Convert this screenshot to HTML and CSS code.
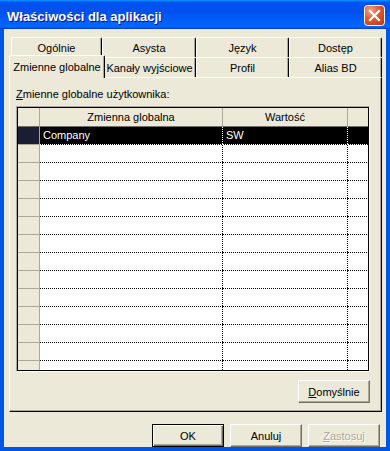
FILE: index.html
```html
<!DOCTYPE html>
<html lang="pl">
<head>
<meta charset="utf-8">
<title>Właściwości dla aplikacji</title>
<link rel="stylesheet" href="styles.css">
</head>
<body>
<div class="window">
  <div class="titlebar">
    <span class="title">Właściwości dla aplikacji</span>
    <button class="close" aria-label="Zamknij">
      <svg width="21" height="21" viewBox="0 0 21 21">
        <defs>
          <radialGradient id="cg" cx="30%" cy="25%" r="90%">
            <stop offset="0" stop-color="#F4A48A"/>
            <stop offset="0.45" stop-color="#E35C33"/>
            <stop offset="1" stop-color="#C03A12"/>
          </radialGradient>
        </defs>
        <rect x="0.5" y="0.5" width="20" height="20" rx="3" fill="url(#cg)" stroke="#fff"/>
        <path d="M6 6 L15 15 M15 6 L6 15" stroke="#fff" stroke-width="2.2" stroke-linecap="square"/>
      </svg>
    </button>
  </div>
  <div class="frame">
    <div class="tabs">
      <div class="tab-row">
        <div class="tab w91">Ogólnie</div>
        <div class="tab w94">Asysta</div>
        <div class="tab w93">Język</div>
        <div class="tab w93">Dostęp</div>
      </div>
      <div class="tab-row">
        <div class="tab w92 selected">Zmienne globalne</div>
        <div class="tab w93">Kanały wyjściowe</div>
        <div class="tab w93">Profil</div>
        <div class="tab w93">Alias BD</div>
      </div>
    </div>
    <div class="panel">
      <div class="label"><u>Z</u>mienne globalne użytkownika:</div>
      <div class="grid">
        <div class="grid-inner">
          <div class="grow head"><div class="rh"></div><div class="c1">Zmienna globalna</div><div class="c2">Wartość</div><div class="c3"></div></div>
          <div class="grow sel"><div class="rh"></div><div class="c1">Company</div><div class="c2">SW</div><div class="c3"></div></div>
          <div class="grow"><div class="rh"></div><div class="c1"></div><div class="c2"></div><div class="c3"></div></div>
          <div class="grow"><div class="rh"></div><div class="c1"></div><div class="c2"></div><div class="c3"></div></div>
          <div class="grow"><div class="rh"></div><div class="c1"></div><div class="c2"></div><div class="c3"></div></div>
          <div class="grow"><div class="rh"></div><div class="c1"></div><div class="c2"></div><div class="c3"></div></div>
          <div class="grow"><div class="rh"></div><div class="c1"></div><div class="c2"></div><div class="c3"></div></div>
          <div class="grow"><div class="rh"></div><div class="c1"></div><div class="c2"></div><div class="c3"></div></div>
          <div class="grow"><div class="rh"></div><div class="c1"></div><div class="c2"></div><div class="c3"></div></div>
          <div class="grow"><div class="rh"></div><div class="c1"></div><div class="c2"></div><div class="c3"></div></div>
          <div class="grow"><div class="rh"></div><div class="c1"></div><div class="c2"></div><div class="c3"></div></div>
          <div class="grow"><div class="rh"></div><div class="c1"></div><div class="c2"></div><div class="c3"></div></div>
          <div class="grow"><div class="rh"></div><div class="c1"></div><div class="c2"></div><div class="c3"></div></div>
          <div class="grow"><div class="rh"></div><div class="c1"></div><div class="c2"></div><div class="c3"></div></div>
          <div class="grow"><div class="rh"></div><div class="c1"></div><div class="c2"></div><div class="c3"></div></div>
        </div>
      </div>
      <div class="panel-actions">
        <button class="btn"><u>D</u>omyślnie</button>
      </div>
    </div>
    <div class="actions">
      <button class="btn default">OK</button>
      <button class="btn">Anuluj</button>
      <button class="btn disabled"><u>Z</u>astosuj</button>
    </div>
  </div>
</div>
</body>
</html>
```
FILE: styles.css
```css
* { box-sizing: border-box; }
html, body { margin: 0; padding: 0; }
body {
  width: 390px;
  height: 451px;
  overflow: hidden;
  background: #fff;
  font-family: "Liberation Sans", Arial, sans-serif;
  font-size: 11px;
  color: #000;
}
.window {
  width: 390px;
  height: 451px;
  display: flex;
  flex-direction: column;
}
.titlebar {
  flex: none;
  height: 29px;
  display: flex;
  align-items: flex-start;
  justify-content: space-between;
  padding: 0 5px 0 7px;
  background: linear-gradient(180deg, #0997ff, #0053ee 8%, #0050ee 40%, #0066ff 88%, #0066ff 93%, #005bff 95%, #003dd7 96%, #003dd7);
}
.title {
  color: #fff;
  font-weight: bold;
  font-size: 13px;
  line-height: 15px;
  margin-top: 9px;
  text-shadow: 1px 1px #0f1089;
}
.close {
  margin-top: 5px;
  width: 21px;
  height: 21px;
  padding: 0;
  border: 0;
  background: none;
  display: block;
}
.close svg { display: block; }
.frame {
  flex: 1;
  display: flex;
  flex-direction: column;
  background: #ECE9D8;
  border: 4px solid #0054E6;
  border-top: 0;
  padding: 8px 4px 0 5px;
}
.tabs {
  display: flex;
  flex-direction: column;
  padding-left: 2px;
}
.tab-row {
  display: flex;
  height: 20px;
}
.tab {
  flex: none;
  height: 20px;
  background: #ECE9D8;
  border-top: 1px solid #fff;
  border-left: 1px solid #fff;
  border-right: 1px solid #000;
  box-shadow: inset -1px 0 #ACA899;
  border-radius: 2px 2px 0 0;
  display: flex;
  align-items: center;
  justify-content: center;
  white-space: nowrap;
}
.w91 { width: 91px; }
.w92 { width: 92px; }
.w93 { width: 93px; }
.w94 { width: 94px; }
.tab.selected {
  width: 96px;
  height: 23px;
  margin: -2px -2px -1px -2px;
  z-index: 1;
  padding-bottom: 1px;
}
.panel {
  flex: none;
  height: 335px;
  display: flex;
  flex-direction: column;
  border-top: 1px solid #fff;
  border-left: 1px solid #fff;
  border-right: 1px solid #000;
  border-bottom: 1px solid #000;
  box-shadow: inset -1px -1px #ACA899;
  padding: 10px 11px 6px 6px;
}
.label {
  line-height: 13px;
  margin-bottom: 5px;
}
.grid {
  height: 266px;
  border: 1px solid;
  border-color: #ACA899 #fff #fff #ACA899;
}
.grid-inner {
  height: 264px;
  border: 1px solid #000;
  background: #fff;
  overflow: hidden;
}
.grow {
  display: grid;
  grid-template-columns: 22px 183px 125px 20px;
  height: 18px;
}
.grow > div {
  padding-left: 3px;
  line-height: 17px;
  white-space: nowrap;
  overflow: hidden;
  background:
    linear-gradient(to right, #000 50%, transparent 50%) left bottom / 2px 1px repeat-x,
    #fff;
}
.grow > .c1,
.grow > .c2 {
  background:
    linear-gradient(to right, #000 50%, transparent 50%) left bottom / 2px 1px repeat-x,
    linear-gradient(to bottom, #000 50%, transparent 50%) right top / 1px 2px repeat-y,
    #fff;
}
.grow > .rh {
  background: #ECE9D8;
  border-right: 1px solid #ACA899;
  border-bottom: 1px solid #ACA899;
}
.grow.head { height: 19px; }
.grow.head > div {
  background: #ECE9D8;
  border-right: 1px solid #ACA899;
  border-bottom: 1px solid #716F64;
  text-align: center;
  padding: 0;
  line-height: 18px;
}
.grow.head > .c3 { border-right: 0; }
.grow.sel > div {
  color: #fff;
  background:
    linear-gradient(to right, #fff 50%, transparent 50%) left bottom / 2px 1px repeat-x,
    #000;
}
.grow.sel > .c1,
.grow.sel > .c2 {
  background:
    linear-gradient(to right, #fff 50%, transparent 50%) left bottom / 2px 1px repeat-x,
    linear-gradient(to bottom, #fff 50%, transparent 50%) right top / 1px 2px repeat-y,
    #000;
}
.grow.sel > .rh {
  background: #1B1E33;
  border-right: 1px solid #ACA899;
  border-bottom: 1px solid #ACA899;
}
.panel-actions {
  display: flex;
  justify-content: flex-end;
  margin-top: 8px;
}
.actions {
  display: flex;
  justify-content: flex-end;
  gap: 6px;
  margin-top: 12px;
  margin-right: 2px;
}
.btn {
  width: 72px;
  height: 23px;
  padding: 0;
  font-family: "Liberation Sans", Arial, sans-serif;
  font-size: 11px;
  color: #000;
  background: #ECE9D8;
  border: 1px solid;
  border-color: #fff #716F64 #716F64 #fff;
  box-shadow: inset -1px -1px #ACA899;
}
.btn.default {
  border-color: #000;
  box-shadow: inset 1px 1px #fff, inset -1px -1px #716F64, inset -2px -2px #ACA899;
}
.btn.disabled {
  color: #ACA899;
  text-shadow: 1px 1px #fff;
}
```
